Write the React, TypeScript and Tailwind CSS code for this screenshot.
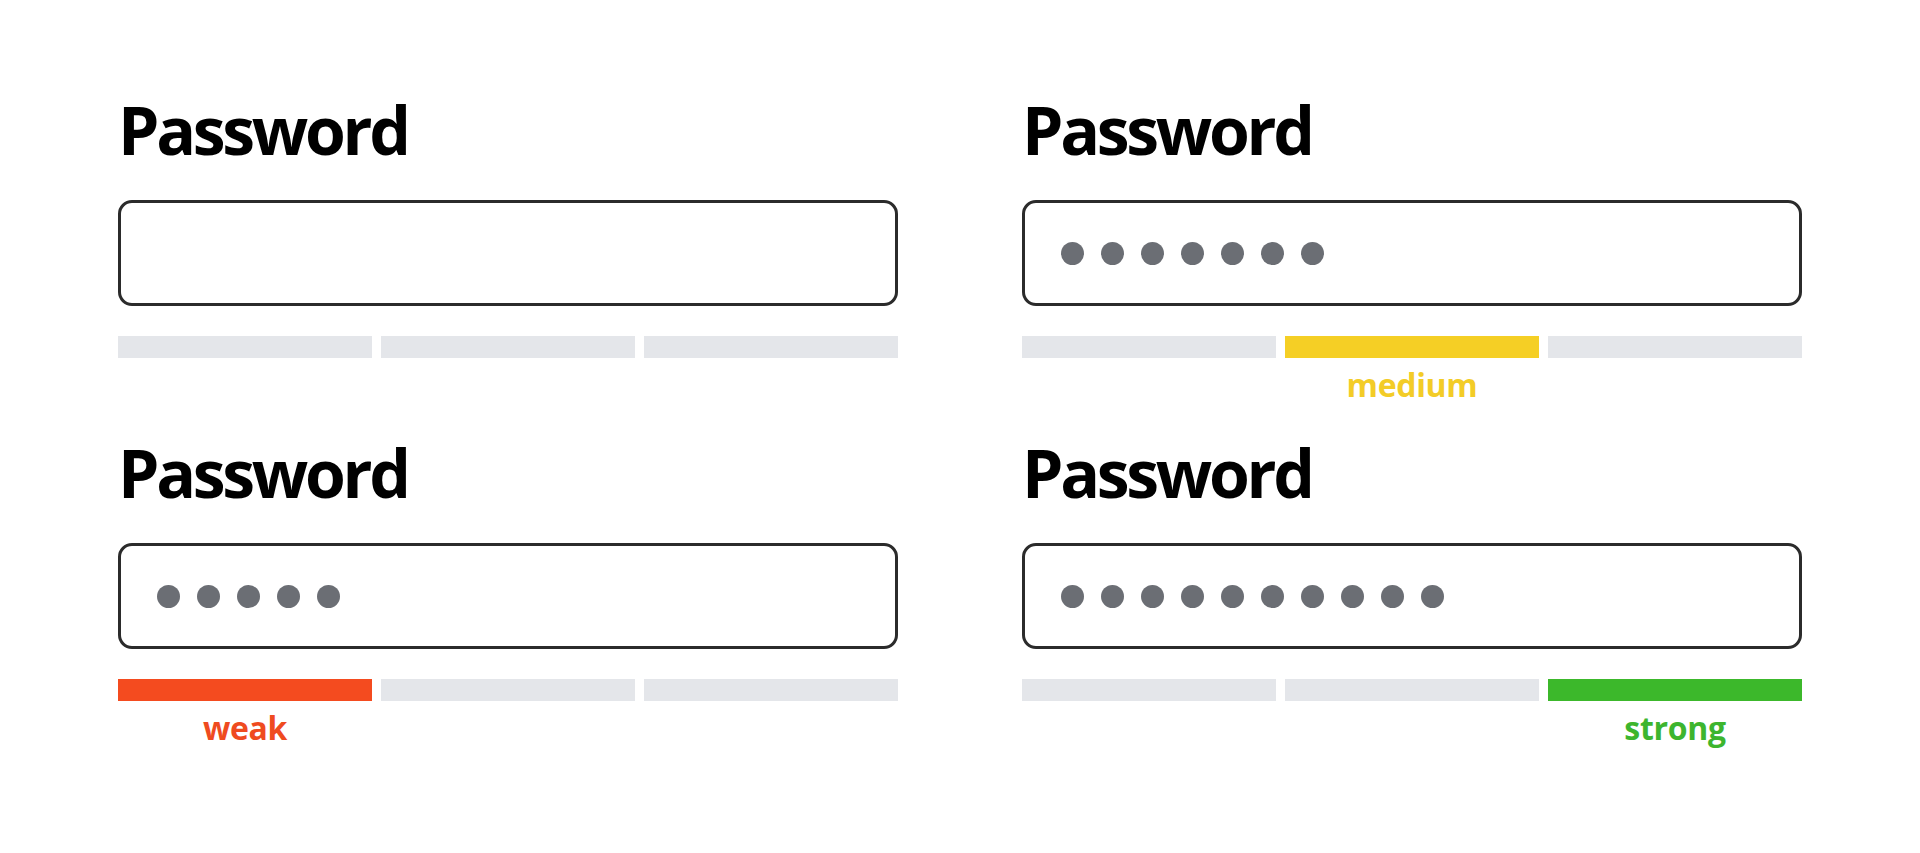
import React from "react";

type Strength = "none" | "weak" | "medium" | "strong";

const FIELDS: { dots: number; strength: Strength }[] = [
  { dots: 0, strength: "none" },
  { dots: 7, strength: "medium" },
  { dots: 5, strength: "weak" },
  { dots: 10, strength: "strong" },
];

const LEVEL: Record<Strength, number> = { none: -1, weak: 0, medium: 1, strong: 2 };

const BAR_COLOR: Record<Strength, string> = {
  none: "bg-[#e4e6ea]",
  weak: "bg-[#f44b1f]",
  medium: "bg-[#f5cf25]",
  strong: "bg-[#3cb82b]",
};

const TEXT_COLOR: Record<Strength, string> = {
  none: "text-transparent",
  weak: "text-[#ef4b1f]",
  medium: "text-[#f3cc27]",
  strong: "text-[#3db52e]",
};

function PasswordField({ dots, strength }: { dots: number; strength: Strength }) {
  const level = LEVEL[strength];
  return (
    <div className="flex flex-col">
      <h2 className="text-[66px] font-bold leading-none tracking-[-0.05em] text-black">Password</h2>
      <div className="mt-[38px] flex h-[106px] items-center gap-[17px] rounded-[14px] border-[3.5px] border-[#2b2b2b] pl-[36px]">
        {Array.from({ length: dots }).map((_, i) => (
          <span key={i} className="h-[23px] w-[23px] rounded-full bg-[#6b6e74]" />
        ))}
      </div>
      <div className="mt-[30px] grid h-[22px] grid-cols-3 gap-[9px]">
        {[0, 1, 2].map((i) => (
          <div key={i} className={i === level ? BAR_COLOR[strength] : BAR_COLOR.none} />
        ))}
      </div>
      <div className="mt-[11px] grid h-[32px] grid-cols-3 gap-[9px]">
        {[0, 1, 2].map((i) => (
          <span
            key={i}
            className={`text-center text-[32px] font-bold leading-none tracking-[-0.01em] ${TEXT_COLOR[strength]}`}
          >
            {i === level ? strength : ""}
          </span>
        ))}
      </div>
    </div>
  );
}

export default function App() {
  return (
    <div
      className="h-[853px] w-[1920px] bg-white px-[118px] pt-[96px]"
      style={{ fontFamily: '"Open Sans", "Noto Sans", sans-serif' }}
    >
      <div className="grid grid-cols-2 gap-x-[124px] gap-y-[38px]">
        {FIELDS.map((f, i) => (
          <PasswordField key={i} dots={f.dots} strength={f.strength} />
        ))}
      </div>
    </div>
  );
}
